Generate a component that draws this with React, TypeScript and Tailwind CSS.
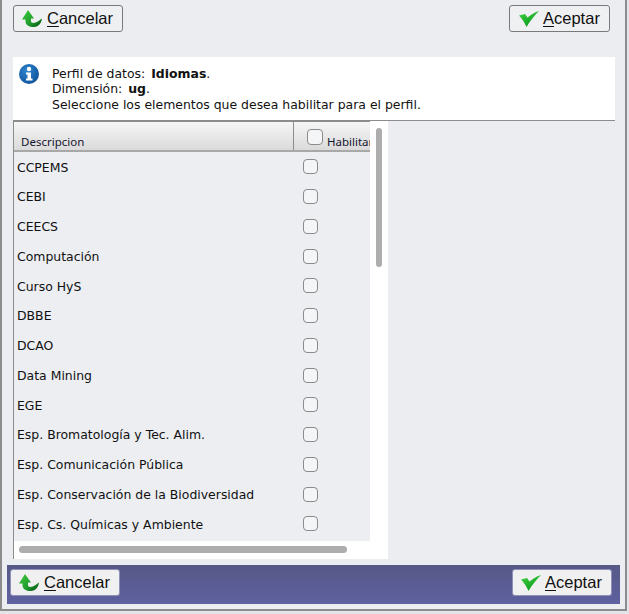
const rows = [
  "CCPEMS",
  "CEBI",
  "CEECS",
  "Computación",
  "Curso HyS",
  "DBBE",
  "DCAO",
  "Data Mining",
  "EGE",
  "Esp. Bromatología y Tec. Alim.",
  "Esp. Comunicación Pública",
  "Esp. Conservación de la Biodiversidad",
  "Esp. Cs. Químicas y Ambiente",
];

function BackIcon() {
  return (
    <svg viewBox="0 0 20 17" className="h-[17px] w-[20px] shrink-0" aria-hidden="true">
      <defs>
        <linearGradient id="back" x1="0" y1="0" x2="1" y2="1">
          <stop offset="0" stopColor="#3ecb3e" />
          <stop offset="0.6" stopColor="#1f9a2c" />
          <stop offset="0.85" stopColor="#0d6a1d" />
          <stop offset="1" stopColor="#3f9f3f" />
        </linearGradient>
      </defs>
      <path d="M6 0 L12 8.5 H9 V11 C9 13 11 13.5 13.5 12.5 C16 11.5 18 10 20 8.5 C19.5 12.5 17 17 12 17 C7 17 3.5 15 3.5 11 V9.5 H0 Z" fill="url(#back)" />
    </svg>
  );
}

function CheckIcon() {
  return (
    <svg viewBox="0 0 20 16" className="h-[16px] w-[20px] shrink-0" aria-hidden="true">
      <defs>
        <linearGradient id="ok" x1="0" y1="0" x2="0.6" y2="1">
          <stop offset="0" stopColor="#45d245" />
          <stop offset="1" stopColor="#0a9a1a" />
        </linearGradient>
      </defs>
      <path d="M0 4.5 L6 3 L8.5 6.5 C11.5 4 15 1.5 20 0 C15.5 4.5 11 10 7.5 16 C5.5 11.5 3 7.5 0 4.5 Z" fill="url(#ok)" />
    </svg>
  );
}

function InfoIcon() {
  return (
    <svg viewBox="0 0 20 20" className="h-[20px] w-[20px] shrink-0" aria-hidden="true">
      <defs>
        <radialGradient id="info" cx="0.4" cy="0.35" r="0.75">
          <stop offset="0" stopColor="#2f86d0" />
          <stop offset="1" stopColor="#0b4f96" />
        </radialGradient>
      </defs>
      <circle cx="10" cy="10" r="10" fill="url(#info)" />
      <circle cx="10" cy="5" r="2.2" fill="#fff" />
      <path d="M7 8.5 H12 V14.5 H13.5 V16.5 H7 V14.5 H8.5 V10.5 H7 Z" fill="#fff" />
    </svg>
  );
}

function ActionButton({ kind, onBar }: { kind: "cancel" | "accept"; onBar?: boolean }) {
  const cancel = kind === "cancel";
  return (
    <button
      type="button"
      className={`flex h-[27px] items-center rounded-[3px] border font-['Liberation_Sans',sans-serif] text-[16.5px] text-[#111] ${
        onBar ? "border-[#8f90b8] bg-[#f0f0f0]" : "border-[#7a7a7a] bg-[#eff0f2]"
      } ${cancel ? "w-[110px] gap-[5px] pl-[8px]" : onBar ? "w-[100px] gap-[4px] pl-[8px]" : "w-[101px] gap-[4px] pl-[9px]"}`}
    >
      {cancel ? <BackIcon /> : <CheckIcon />}
      <span>
        <span className="underline underline-offset-2">{cancel ? "C" : "A"}</span>
        {cancel ? "ancelar" : "ceptar"}
      </span>
    </button>
  );
}

function Box({ large }: { large?: boolean }) {
  return <span className={`block rounded-[4px] border-[1.5px] border-[#8b8b8b] bg-[#f4f5f7] ${large ? "h-[16px] w-[16px]" : "h-[15px] w-[15px]"}`} />;
}

export default function App() {
  return (
    <div className="h-[614px] w-[629px] overflow-hidden bg-[#e4e5e8]">
      <div className="h-[611px] w-[627px] border-r-2 border-b-2 border-l-2 border-[#8c8c8c] bg-[#ecedf1] font-['DejaVu_Sans',sans-serif] text-[12.45px] text-[#111]">
        <div className="flex justify-between pt-[5px] pr-[15px] pl-[11px]">
          <ActionButton kind="cancel" />
          <ActionButton kind="accept" />
        </div>

        <div className="mt-[25px] ml-[11px] flex h-[64px] w-[602px] gap-[13px] border-b border-[#8c8c8c] bg-white pt-[7px] pl-[6px] leading-[15.5px]">
          <InfoIcon />
          <div className="pt-[1.5px]">
            <p>
              Perfil de datos: <b className="ml-[2px]">Idiomas</b>.
            </p>
            <p>
              Dimensión: <b className="ml-[2px]">ug</b>.
            </p>
            <p>Seleccione los elementos que desea habilitar para el perfil.</p>
          </div>
        </div>

        <div className="relative ml-[11px] h-[438px] w-[375px] border-l border-[#8c8c8c] bg-white">
          <div className="w-[356px] overflow-hidden bg-[#eceef2] pb-[2px]">
            <div className="flex h-[31px] border-t border-b-2 border-t-[#8c8c8c] border-b-[#a8a8a8] bg-gradient-to-b from-[#f6f6f6] to-[#dadada] font-['Noto_Sans',sans-serif] text-[11.5px] text-[#14142e]">
              <div className="flex w-[280px] shrink-0 items-end border-r border-[#8c8c8c] pl-[7px]">Descripcion</div>
              <div className="flex shrink-0 items-end gap-[4px] pl-[13px]">
                <span className="mb-[5px]">
                  <Box large />
                </span>
                <span>Habilitar</span>
              </div>
            </div>
            {rows.map((row) => (
              <div key={row} className="flex h-[29.75px] items-center">
                <div className="w-[289px] shrink-0 pt-[2px] pl-[3px]">{row}</div>
                <Box />
              </div>
            ))}
          </div>
          <div className="absolute top-[7px] left-[362px] h-[139px] w-[6px] rounded-full bg-[#adadad]" />
          <div className="absolute top-[425px] left-[5px] h-[7px] w-[328px] rounded-full bg-[#adadad]" />
        </div>

        <div className="mt-[6px] ml-[5px] flex h-[39px] w-[613px] justify-between bg-gradient-to-b from-[#565887] to-[#5f61a1] pt-[4px] pr-[8px] pl-[3px]">
          <ActionButton kind="cancel" onBar />
          <ActionButton kind="accept" onBar />
        </div>
      </div>
    </div>
  );
}
